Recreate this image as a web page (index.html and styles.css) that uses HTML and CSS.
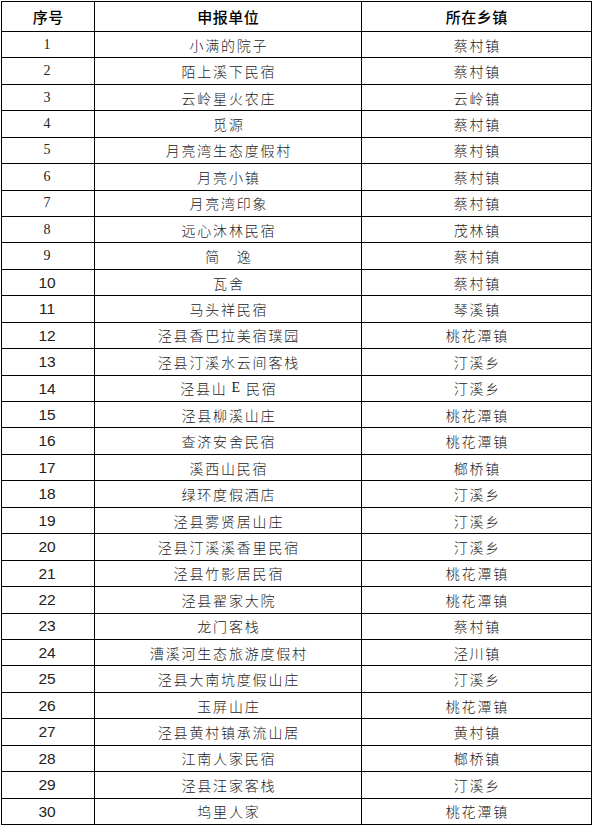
FILE: index.html
```html
<!DOCTYPE html>
<html lang="zh-CN">
<head>
<meta charset="utf-8">
<title>申报单位</title>
<link rel="stylesheet" href="styles.css">
</head>
<body>
<div class="sheet">
  <div class="cell head">序号</div><div class="cell head">申报单位</div><div class="cell head">所在乡镇</div>
  <div class="cell num serif">1</div><div class="cell txt">小满的院子</div><div class="cell txt">蔡村镇</div>
  <div class="cell num serif">2</div><div class="cell txt">陌上溪下民宿</div><div class="cell txt">蔡村镇</div>
  <div class="cell num serif">3</div><div class="cell txt">云岭星火农庄</div><div class="cell txt">云岭镇</div>
  <div class="cell num serif">4</div><div class="cell txt">觅源</div><div class="cell txt">蔡村镇</div>
  <div class="cell num serif">5</div><div class="cell txt">月亮湾生态度假村</div><div class="cell txt">蔡村镇</div>
  <div class="cell num serif">6</div><div class="cell txt">月亮小镇</div><div class="cell txt">蔡村镇</div>
  <div class="cell num serif">7</div><div class="cell txt">月亮湾印象</div><div class="cell txt">蔡村镇</div>
  <div class="cell num serif">8</div><div class="cell txt">远心沐林民宿</div><div class="cell txt">茂林镇</div>
  <div class="cell num serif">9</div><div class="cell txt">简　逸</div><div class="cell txt">蔡村镇</div>
  <div class="cell num">10</div><div class="cell txt">瓦舍</div><div class="cell txt">蔡村镇</div>
  <div class="cell num">11</div><div class="cell txt">马头祥民宿</div><div class="cell txt">琴溪镇</div>
  <div class="cell num">12</div><div class="cell txt">泾县香巴拉美宿璞园</div><div class="cell txt">桃花潭镇</div>
  <div class="cell num">13</div><div class="cell txt">泾县汀溪水云间客栈</div><div class="cell txt">汀溪乡</div>
  <div class="cell num">14</div><div class="cell txt">泾县山<span class="latin">E</span>民宿</div><div class="cell txt">汀溪乡</div>
  <div class="cell num">15</div><div class="cell txt">泾县柳溪山庄</div><div class="cell txt">桃花潭镇</div>
  <div class="cell num">16</div><div class="cell txt">查济安舍民宿</div><div class="cell txt">桃花潭镇</div>
  <div class="cell num">17</div><div class="cell txt">溪西山民宿</div><div class="cell txt">榔桥镇</div>
  <div class="cell num">18</div><div class="cell txt">绿环度假酒店</div><div class="cell txt">汀溪乡</div>
  <div class="cell num">19</div><div class="cell txt">泾县雾贤居山庄</div><div class="cell txt">汀溪乡</div>
  <div class="cell num">20</div><div class="cell txt">泾县汀溪溪香里民宿</div><div class="cell txt">汀溪乡</div>
  <div class="cell num">21</div><div class="cell txt">泾县竹影居民宿</div><div class="cell txt">桃花潭镇</div>
  <div class="cell num">22</div><div class="cell txt">泾县翟家大院</div><div class="cell txt">桃花潭镇</div>
  <div class="cell num">23</div><div class="cell txt">龙门客栈</div><div class="cell txt">蔡村镇</div>
  <div class="cell num">24</div><div class="cell txt">漕溪河生态旅游度假村</div><div class="cell txt">泾川镇</div>
  <div class="cell num">25</div><div class="cell txt">泾县大南坑度假山庄</div><div class="cell txt">汀溪乡</div>
  <div class="cell num">26</div><div class="cell txt">玉屏山庄</div><div class="cell txt">桃花潭镇</div>
  <div class="cell num">27</div><div class="cell txt">泾县黄村镇承流山居</div><div class="cell txt">黄村镇</div>
  <div class="cell num">28</div><div class="cell txt">江南人家民宿</div><div class="cell txt">榔桥镇</div>
  <div class="cell num">29</div><div class="cell txt">泾县汪家客栈</div><div class="cell txt">汀溪乡</div>
  <div class="cell num">30</div><div class="cell txt">坞里人家</div><div class="cell txt">桃花潭镇</div>
</div>
</body>
</html>
```
FILE: styles.css
```css
html, body {
  margin: 0;
  padding: 0;
  background: #ffffff;
}

body {
  padding: 1px 0 0 1px;
}

.sheet {
  box-sizing: border-box;
  width: 591px;
  height: 824px;
  padding: 1px;
  background: #000000;
  display: grid;
  grid-template-columns: 92px 266px 229px;
  grid-template-rows: 29px repeat(30, 1fr);
  gap: 1px;
}

.cell {
  background: #ffffff;
  display: flex;
  align-items: center;
  justify-content: center;
  color: #1a1a1a;
  font-family: "Noto Sans CJK SC", "Noto Sans", sans-serif;
  line-height: 1;
}

.head {
  font-size: 15px;
  font-weight: 500;
  color: #000000;
  letter-spacing: 0.5px;
  padding-left: 0.5px;
}

.txt {
  font-size: 14px;
  font-weight: 300;
  letter-spacing: 1.8px;
  padding-left: 1.8px;
  color: #222222;
}

.latin {
  font-family: "Liberation Serif", serif;
  padding: 0 4px;
}

.num {
  font-family: "Liberation Sans", Arial, sans-serif;
  font-size: 15.5px;
  color: #222222;
  padding-right: 2px;
}

.num.serif {
  font-family: "Liberation Serif", "Times New Roman", serif;
  font-size: 14px;
}
```
